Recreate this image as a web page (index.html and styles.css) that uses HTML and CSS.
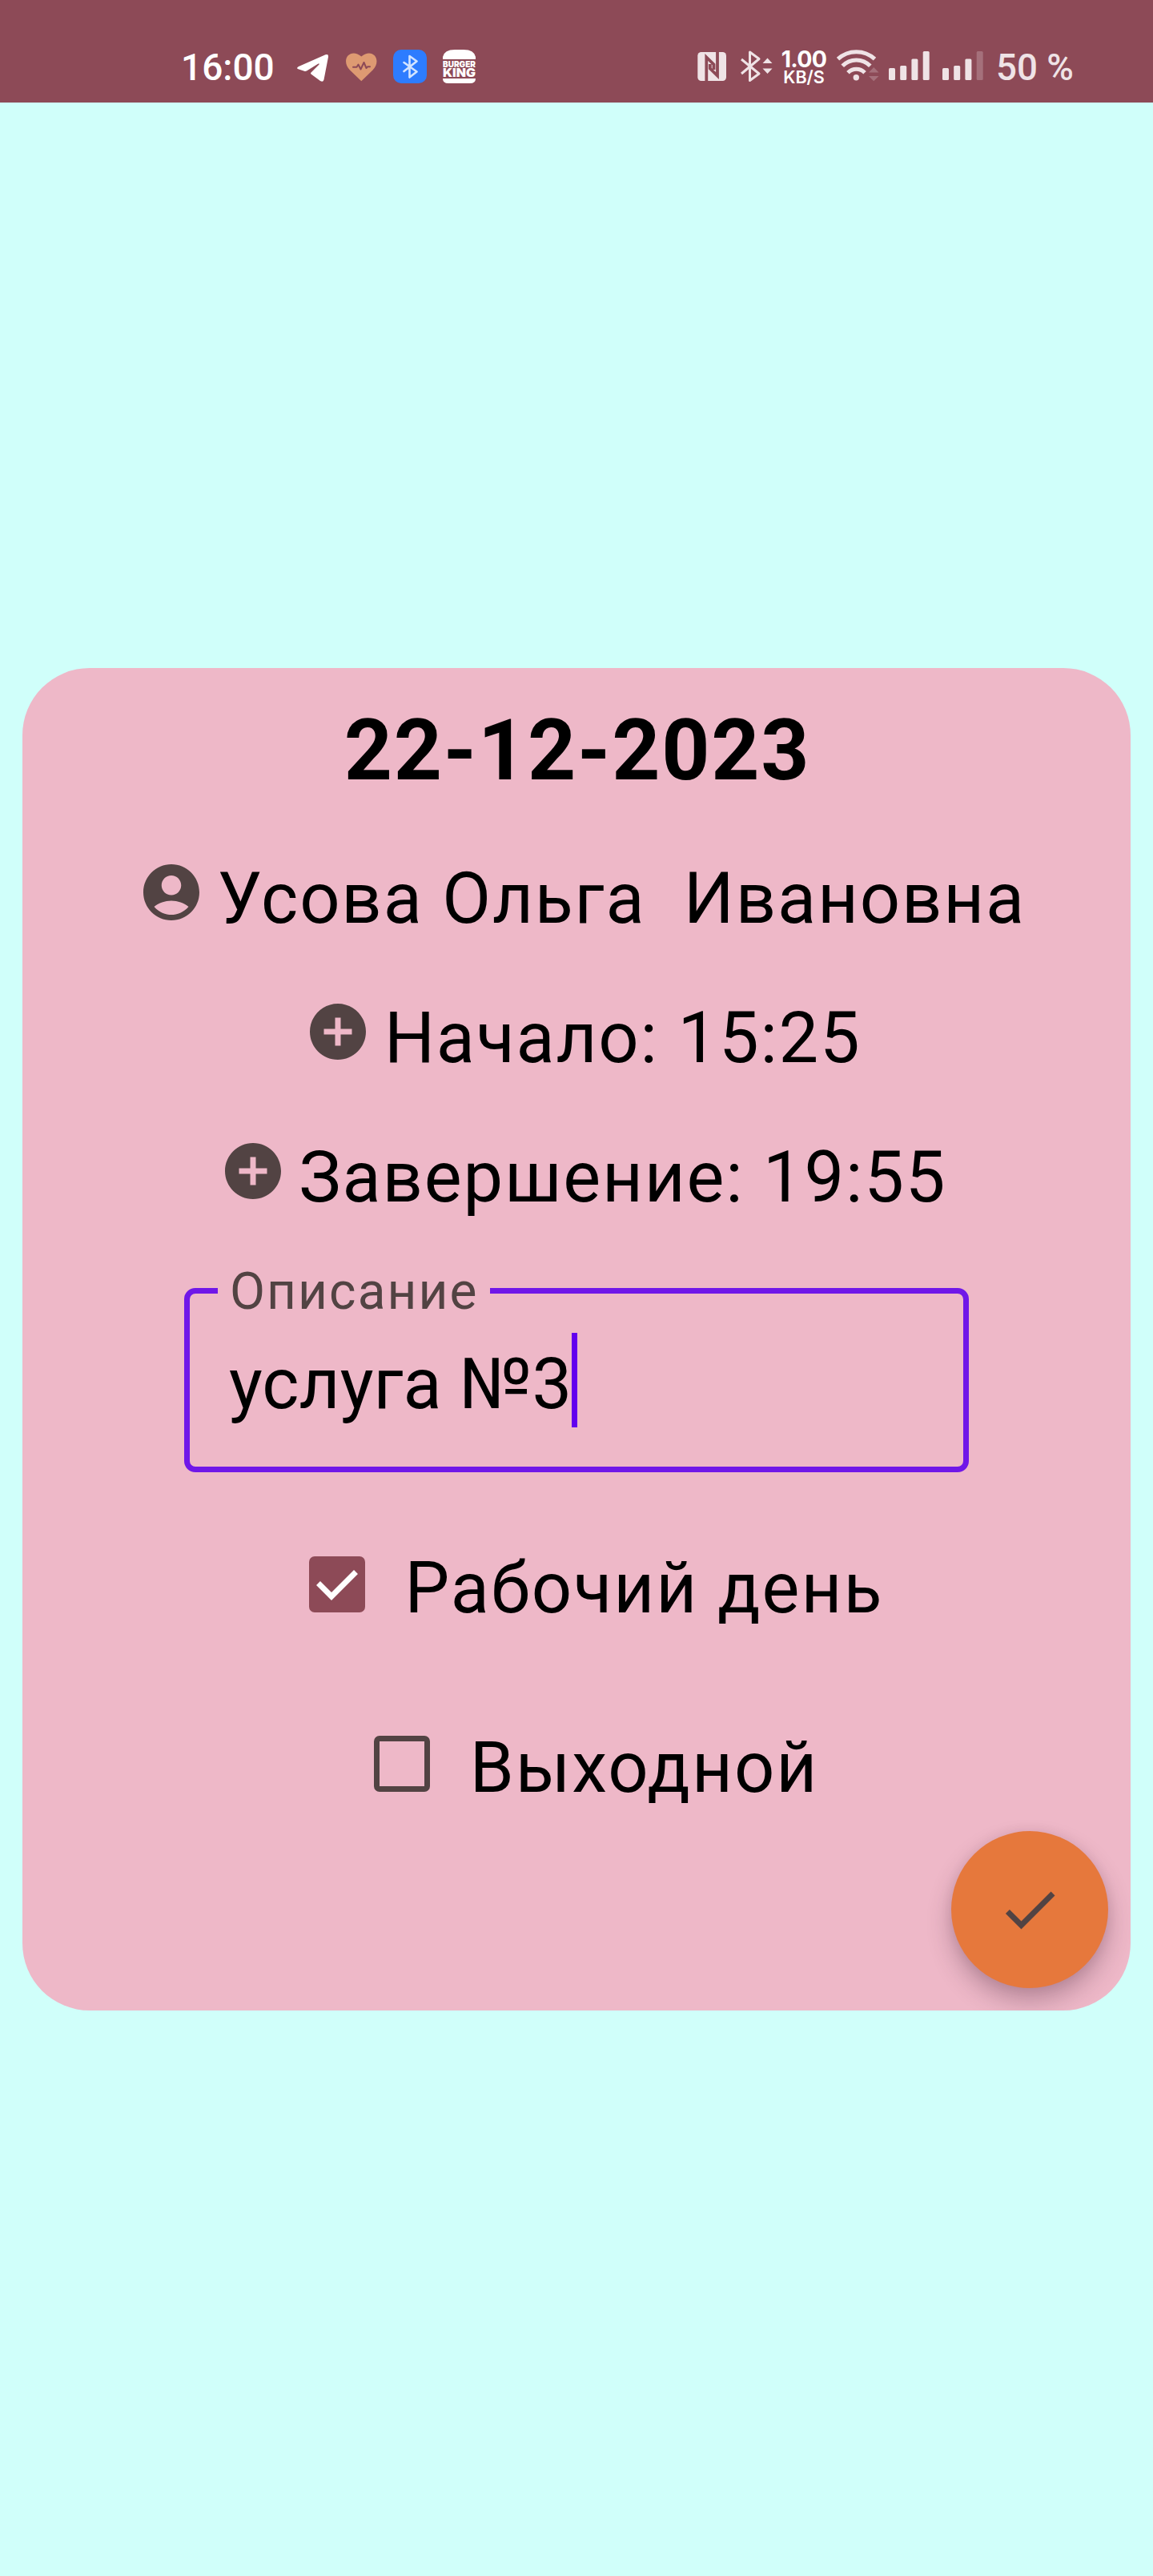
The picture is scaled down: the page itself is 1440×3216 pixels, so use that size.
FILE: index.html
```
<!DOCTYPE html>
<html lang="ru">
<head>
<meta charset="utf-8">
<title>22-12-2023</title>
<link rel="stylesheet" href="styles.css">
</head>
<body>
<header class="status-bar">
  <div class="status-left">
    <span class="clock">16:00</span>
    <svg class="glyph" width="42" height="44" viewBox="370 60 42 44"><path fill="#fff" d="M373 83 406.500 68.300Q410.500 67 410 71L404.500 99.500Q403.500 103 400 101L388.500 92.500Q387.500 91.500 388.500 90.500L398.500 80.500Q399.500 79 397.500 79.500L383 88.500Q381.500 89.300 380 88.700L372.500 86.300Q369.500 85 373 83Z"/></svg>
    <svg class="glyph" width="39" height="44" viewBox="432 60 39 44"><path fill="#de9a72" d="M451.300 101.300 437 87.500C424.500 74 438 59 451.300 70.500C464.500 59 478 74 465.500 87.500Z"/><path fill="none" stroke="#8d4a57" stroke-width="2" stroke-linejoin="round" stroke-linecap="round" d="M441 83.800H445.500L447.500 80.500 450.500 86.500 454.500 78 457.500 85 459 83.300H462"/></svg>
    <svg class="glyph" width="42" height="44" viewBox="491 60 42 44"><rect x="491" y="62" width="42" height="42" rx="10" fill="#2d7cff"/><path fill="none" stroke="#d3e4ff" stroke-width="2.600" stroke-linejoin="round" stroke-linecap="round" d="M504.500 78 520.500 89.500 511.500 96.500V70L520.500 76.500 504.500 89"/></svg>
    <svg class="glyph" width="42" height="44" viewBox="553 60 42 44"><path fill="#fff" d="M553 74V71Q555 62 568 62H579Q592 62 594 71V74ZM553 98H594Q594 104 587 104H560Q553 104 553 98Z"/><text class="brand" x="553" y="83.800" font-size="11" textLength="41" lengthAdjust="spacingAndGlyphs">BURGER</text><text class="brand" x="553" y="95.600" font-size="14" textLength="41" lengthAdjust="spacingAndGlyphs">KING</text></svg>
  </div>
  <div class="status-right">
    <svg class="glyph" width="43" height="44" viewBox="871 60 43 44"><rect x="871.300" y="65" width="35.700" height="36" rx="4.500" fill="#efe3e6"/><path fill="none" stroke="#8d4a57" stroke-width="3.800" d="M882.300 101.500V71.500L891.500 80.500V87M896 64.500V94.500L886.800 85.500V80"/></svg>
    <svg class="glyph" width="42" height="44" viewBox="924 60 42 44"><path fill="none" stroke="#efe3e6" stroke-width="3" stroke-linejoin="round" d="M926 74 948 92 936.500 100.500V65L948 73.500 926 92"/><path fill="#efe3e6" d="M952.500 79H964.500L958.500 72.500ZM952.500 85.500H964.500L958.500 92Z"/></svg>
    <div class="net-speed"><span class="speed-value">1.00</span><span class="speed-unit">KB/S</span></div>
    <svg class="glyph" width="56" height="44" viewBox="1044 60 56 44"><g fill="none" stroke="#efe3e6" stroke-width="5"><path d="M1046.500 73.700A34 34 0 0 1 1092.500 73.700M1052.200 82.300A24 24 0 0 1 1086.800 82.300M1059 90.800A14.500 14.500 0 0 1 1080 90.800"/></g><circle cx="1069.300" cy="96.800" r="3.700" fill="#efe3e6"/><path fill="#a5707b" d="M1085 90.500H1097.500L1091.200 84ZM1085 95H1097.500L1091.200 101.300Z"/></svg>
    <svg class="glyph" width="57" height="44" viewBox="1110 60 57 44" fill="#efe3e6"><rect x="1110" y="85" width="8" height="15" rx="1.500"/><rect x="1124.200" y="82" width="8" height="18" rx="1.500"/><rect x="1138.400" y="73.500" width="8" height="26.500" rx="1.500"/><rect x="1152.700" y="64" width="8" height="36" rx="1.500"/></svg>
    <svg class="glyph" width="57" height="44" viewBox="1177 60 57 44" fill="#efe3e6"><rect x="1177" y="85" width="8" height="15" rx="1.500"/><rect x="1191.200" y="82" width="8" height="18" rx="1.500"/><rect x="1205.400" y="73.500" width="8" height="26.500" rx="1.500"/><rect x="1219.700" y="64" width="8" height="36" rx="1.500" fill="#a5707b"/></svg>
    <span class="battery">50 %</span>
  </div>
</header>
<main class="card">
  <h1 class="date">22-12-2023</h1>
  <div class="rows">
    <div class="row row-person">
      <svg class="icon" viewBox="0 0 24 24"><path fill-rule="evenodd" d="M12 2C6.480 2 2 6.480 2 12s4.480 10 10 10 10-4.480 10-10S17.520 2 12 2zm0 4c1.930 0 3.500 1.570 3.500 3.500S13.930 13 12 13s-3.500-1.570-3.500-3.500S10.070 6 12 6zm0 14c-2.030 0-4.430-.820-6.140-2.880C7.550 15.800 9.680 15 12 15s4.450.800 6.140 2.120C16.430 19.180 14.030 20 12 20z"/></svg>
      <span class="row-text">Усова Ольга  Ивановна</span>
    </div>
    <div class="row">
      <svg class="icon" viewBox="0 0 24 24"><path d="M12 2C6.480 2 2 6.480 2 12s4.480 10 10 10 10-4.480 10-10S17.520 2 12 2zm5 11h-4v4h-2v-4H7v-2h4V7h2v4h4v2z"/></svg>
      <span class="row-text">Начало: 15:25</span>
    </div>
    <div class="row">
      <svg class="icon" viewBox="0 0 24 24"><path d="M12 2C6.480 2 2 6.480 2 12s4.480 10 10 10 10-4.480 10-10S17.520 2 12 2zm5 11h-4v4h-2v-4H7v-2h4V7h2v4h4v2z"/></svg>
      <span class="row-text">Завершение: 19:55</span>
    </div>
  </div>
  <fieldset class="field">
    <legend class="field-label">Описание</legend>
    <div class="field-value"><span>услуга №3</span><i class="caret"></i></div>
  </fieldset>
  <div class="checks">
    <div class="check">
      <svg class="box" viewBox="0 0 70 70"><rect width="70" height="70" rx="7" fill="#8d4a57"/><path fill="none" stroke="#fff" stroke-width="7" d="M11.500 33.500 28 50 58.500 19.500"/></svg>
      <span class="check-text">Рабочий день</span>
    </div>
    <div class="check">
      <svg class="box" viewBox="0 0 70 70"><rect x="3.500" y="3.500" width="63" height="63" rx="3.500" fill="none" stroke="#524343" stroke-width="7"/></svg>
      <span class="check-text">Выходной</span>
    </div>
  </div>
  <button class="fab" aria-label="Сохранить"><svg class="icon" viewBox="0 0 24 24"><path d="M9 16.170 4.830 12l-1.420 1.410L9 19 21 7l-1.410-1.410z"/></svg></button>
</main>
</body>
</html>
```
FILE: styles.css
```
* { box-sizing: border-box; }
body {
  margin: 0;
  min-height: 3216px;
  background: #d0fffa;
  font-family: Roboto, "Noto Sans", sans-serif;
  color: #000;
}
.status-bar {
  display: flex;
  justify-content: space-between;
  height: 128px;
  padding: 60px 95px 0 226px;
  background: #8d4a57;
  white-space: nowrap;
}
.status-left, .status-right { display: flex; align-items: flex-start; }
.status-left { gap: 20px; }
.status-right { gap: 10px; flex: none; width: 474px; }
.glyph { display: block; flex: none; }
.brand { font-family: Inter, sans-serif; font-weight: 900; fill: #fff; }
.clock { width: 124px; font-size: 46px; font-weight: 500; line-height: 49px; color: #fff; }
.battery { font-size: 45.700px; font-weight: 500; line-height: 49px; color: #efe3e6; }
.net-speed {
  display: flex;
  flex-direction: column;
  align-items: center;
  flex: none;
  width: 56px;
  margin-right: 2px;
  font-family: Inter, sans-serif;
  color: #fff;
}
.speed-value { font-size: 28.500px; font-weight: 700; letter-spacing: -.700px; line-height: 27px; }
.speed-unit { font-size: 21.500px; font-weight: 600; line-height: 18px; }

.card {
  position: relative;
  width: 1384px;
  height: 1676px;
  margin: 706px auto 0;
  padding-top: 44px;
  border-radius: 84px;
  background: #eeb8c8;
  overflow: hidden;
  font-size: 88.400px;
  letter-spacing: 1.800px;
}
.date {
  margin: 0;
  padding-left: 2px;
  font-size: 105px;
  font-weight: 700;
  line-height: 120px;
  text-align: center;
}
.rows {
  display: flex;
  flex-direction: column;
  gap: 82px;
  margin-top: 74px;
}
.row {
  display: flex;
  justify-content: center;
  gap: 15.500px;
  height: 92px;
  padding-left: 16px;
}
.row-person { padding-left: 13px; }
.icon { display: block; flex: none; width: 84px; height: 84px; fill: #524343; }
.row-text { margin-top: 8px; line-height: 84px; white-space: pre; }
.field {
  width: 980px;
  height: 268px;
  margin: 58px auto 0;
  padding: 11px 35px 0;
  border: 7px solid #7017e8;
  border-radius: 14px;
}
.field-label {
  height: 83px;
  padding: 0 14px 0 15px;
  font-size: 64px;
  letter-spacing: 2.070px;
  line-height: 86px;
  color: #524343;
}
.field-value {
  display: flex;
  margin-left: 14px;
  letter-spacing: 0;
  line-height: 128px;
}
.caret { width: 7px; height: 118px; margin-left: -0.500px; background: #6200ee; }
.checks {
  display: flex;
  flex-direction: column;
  gap: 154px;
  margin-top: 105px;
}
.check {
  display: flex;
  justify-content: center;
  gap: 50px;
  height: 70px;
  padding-left: 49px;
  letter-spacing: 2px;
}
.box { display: block; flex: none; width: 70px; height: 70px; }
.check-text { margin-top: -2px; line-height: 84px; }
.fab {
  position: absolute;
  right: 28px;
  bottom: 28px;
  display: flex;
  align-items: center;
  justify-content: center;
  width: 196px;
  height: 196px;
  padding: 0;
  border: 0;
  border-radius: 50%;
  background: #e6783c;
  box-shadow: 0 16px 30px rgba(60, 30, 50, .3), 0 0 14px rgba(60, 30, 50, .08);
}
```
